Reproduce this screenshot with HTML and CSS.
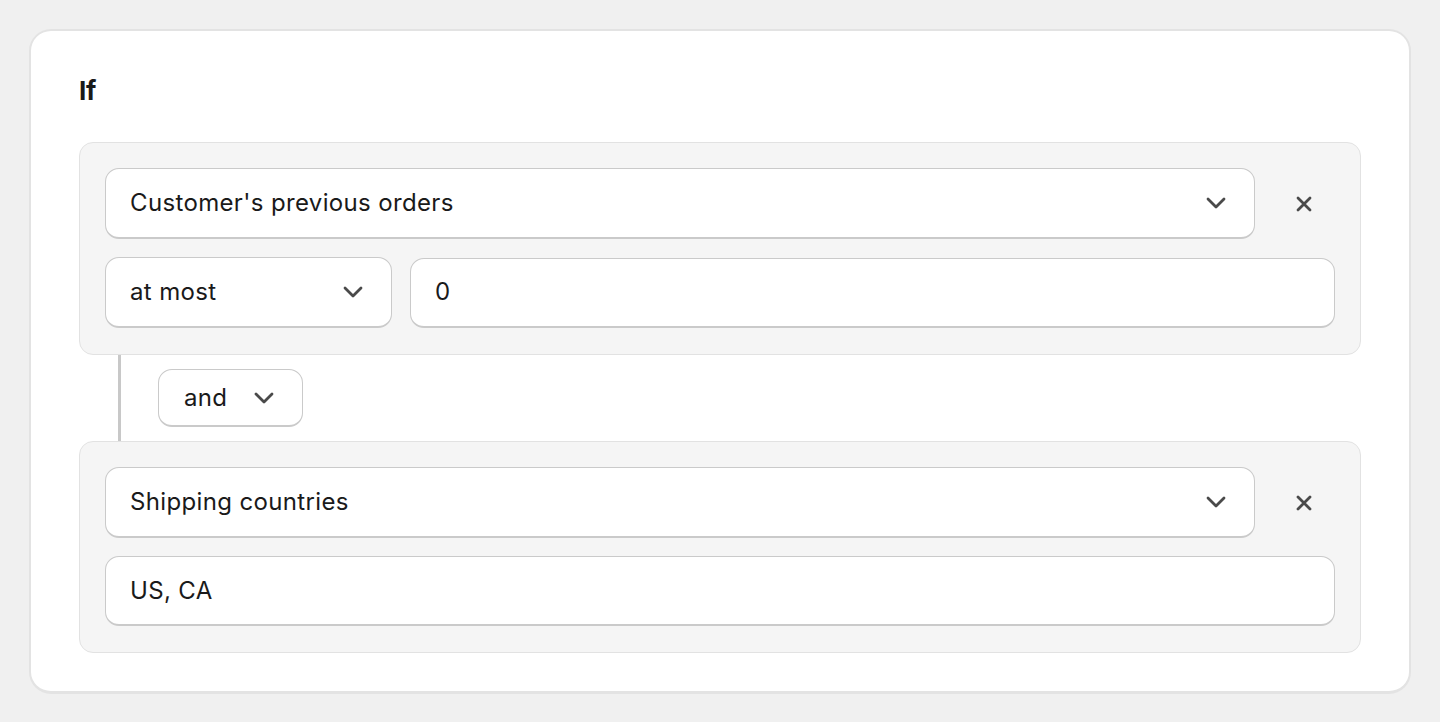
FILE: index.html
```html
<!DOCTYPE html>
<html>
<head>
<meta charset="utf-8">
<link rel="stylesheet" href="styles.css">
</head>
<body>
<div class="card">
  <h2 class="title">If</h2>
  <div class="group">
    <div class="row">
      <div class="field select grow">
        <span>Customer's previous orders</span>
        <svg class="chev" viewBox="0 0 20 12" width="20" height="12"><path d="M2 2 L10 10 L18 2" fill="none" stroke="#4a4a4a" stroke-width="2.8" stroke-linecap="round" stroke-linejoin="round"/></svg>
      </div>
      <button class="remove" aria-label="Remove">
        <svg viewBox="0 0 16 16" width="16" height="16"><path d="M2 2 L14 14 M14 2 L2 14" fill="none" stroke="#4a4a4a" stroke-width="2.8" stroke-linecap="round"/></svg>
      </button>
    </div>
    <div class="row">
      <div class="field select small">
        <span>at most</span>
        <svg class="chev" viewBox="0 0 20 12" width="20" height="12"><path d="M2 2 L10 10 L18 2" fill="none" stroke="#4a4a4a" stroke-width="2.8" stroke-linecap="round" stroke-linejoin="round"/></svg>
      </div>
      <div class="field input grow"><span>0</span></div>
    </div>
  </div>
  <div class="connector">
    <div class="field select andbtn">
      <span>and</span>
      <svg class="chev" viewBox="0 0 20 12" width="20" height="12"><path d="M2 2 L10 10 L18 2" fill="none" stroke="#4a4a4a" stroke-width="2.8" stroke-linecap="round" stroke-linejoin="round"/></svg>
    </div>
  </div>
  <div class="group">
    <div class="row">
      <div class="field select grow">
        <span>Shipping countries</span>
        <svg class="chev" viewBox="0 0 20 12" width="20" height="12"><path d="M2 2 L10 10 L18 2" fill="none" stroke="#4a4a4a" stroke-width="2.8" stroke-linecap="round" stroke-linejoin="round"/></svg>
      </div>
      <button class="remove" aria-label="Remove">
        <svg viewBox="0 0 16 16" width="16" height="16"><path d="M2 2 L14 14 M14 2 L2 14" fill="none" stroke="#4a4a4a" stroke-width="2.8" stroke-linecap="round"/></svg>
      </button>
    </div>
    <div class="row">
      <div class="field input grow"><span>US, CA</span></div>
    </div>
  </div>
</div>
</body>
</html>
```
FILE: styles.css
```css
* { box-sizing: border-box; }
html, body { margin: 0; padding: 0; }
body {
  background: #f0f0f0;
  font-family: Inter, "Noto Sans", sans-serif;
  color: #1a1a1a;
  padding: 29px 30px 0 29px;
}
.card {
  background: #ffffff;
  border: 2px solid #e3e3e3;
  border-bottom-width: 3px;
  border-radius: 22px;
  padding: 46px 48px 38px 48px;
  width: 1382px;
  height: 665px;
}
.title {
  margin: 0 0 37px 0;
  font-size: 26px;
  font-weight: 700;
  line-height: 28px;
  letter-spacing: -0.2px;
}
.group {
  background: #f5f5f5;
  border: 1px solid #e2e2e2;
  border-radius: 14px;
  padding: 25px 25px 26px 25px;
  display: flex;
  flex-direction: column;
  gap: 18px;
}
.row {
  display: flex;
  gap: 18px;
  align-items: center;
}
.field {
  height: 71px;
  background: #ffffff;
  border: 1.5px solid #cacaca;
  border-bottom-width: 2.5px;
  border-radius: 14px;
  display: flex;
  align-items: center;
  justify-content: space-between;
  padding: 0 28px 0 24px;
  font-size: 24px;
  letter-spacing: 0.35px;
  line-height: 1;
}
.input { height: 70px; }
.grow { flex: 1; }
.small { width: 287px; }
.remove {
  width: 62px;
  height: 62px;
  border: none;
  background: transparent;
  display: flex;
  align-items: center;
  justify-content: center;
  padding: 0;
  margin-left: 0;
}
.connector {
  margin-left: 39px;
  border-left: 3px solid #c8c8c8;
  padding: 14px 0 14px 37px;
}
.andbtn {
  width: 145px;
  height: 58px;
  padding: 0 28px 0 25px;
}
.chev { display: block; }
```
